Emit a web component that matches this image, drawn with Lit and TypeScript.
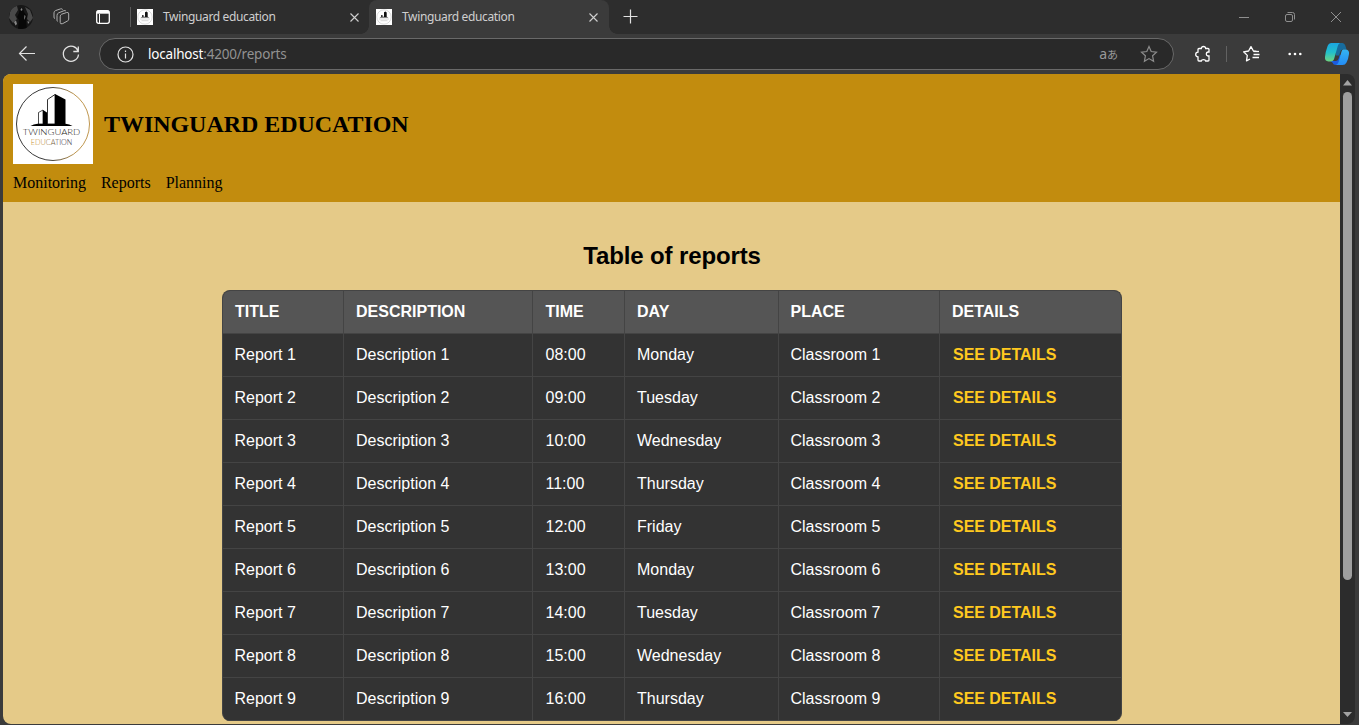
import { LitElement, html, svg, css } from "lit";
import { customElement, property } from "lit/decorators.js";

const DAYS = ["Monday", "Tuesday", "Wednesday", "Thursday", "Friday"];
const reports = Array.from({ length: 9 }, (_, i) => ({
  title: `Report ${i + 1}`,
  description: `Description ${i + 1}`,
  time: `${String(i + 8).padStart(2, "0")}:00`,
  day: DAYS[i % 5],
  place: `Classroom ${i + 1}`,
}));

const buildings = svg`
  <path d="M17.500 42q3-2 7-2.300h28q4 .3 7 2.300z" fill="#000"/>
  <path d="M42 10l10.500 5.500V41H42z" fill="#000"/>
  <path d="M34.500 40V15.500L42 10.500V40z" fill="#fff" stroke="#000" stroke-width=".8"/>
  <path d="M30 26l4 2.500V41h-4z" fill="#000"/>
  <path d="M25.500 40V28.500l4.500-2.500v14z" fill="#fff" stroke="#000" stroke-width=".7"/>`;

@customElement("twin-logo")
export class TwinLogo extends LitElement {
  static styles = css`
    :host { display: block; flex: none; }
    svg { display: block; width: 100%; height: 100%; }
    text { font-family: Lato, sans-serif; font-weight: 300; }
  `;
  render() {
    return html`<svg viewBox="0 0 80 80">
      <defs><linearGradient id="ring"><stop offset=".45" stop-color="#222"/><stop offset=".8" stop-color="#b88b3b"/></linearGradient>
      <linearGradient id="edu"><stop offset=".25" stop-color="#c08c2c"/><stop offset=".75" stop-color="#333"/></linearGradient></defs>
      <rect width="80" height="80" fill="#fff"/>
      <circle cx="40" cy="40" r="36.500" fill="none" stroke="url(#ring)" stroke-width=".9"/>
      ${buildings}
      <text x="9.800" y="51.300" font-size="8.200" textLength="57.500" lengthAdjust="spacingAndGlyphs" fill="#222">TWINGUARD</text>
      <text x="17.800" y="61" font-size="6.800" textLength="41.500" lengthAdjust="spacingAndGlyphs" fill="url(#edu)">EDUCATION</text>
    </svg>`;
  }
}

@customElement("browser-tab")
export class BrowserTab extends LitElement {
  @property({ type: Boolean, reflect: true }) active = false;
  static styles = css`
    :host { display: flex; align-items: center; box-sizing: border-box; height: 34px; width: 239px; padding: 0 9px 0 7px; position: relative; color: #cfcfcf; }
    :host([active]) { background: #3b3b3b; border-radius: 8px 8px 0 0; width: 240px; padding-right: 10px; }
    .favicon { width: 16px; height: 16px; margin-right: 10px; flex: none; }
    .label { flex: 1; font: 12px/16px "Noto Sans", sans-serif; letter-spacing: -0.36px; white-space: nowrap; }
    .close { width: 11px; height: 11px; flex: none; }
    .foot { position: absolute; bottom: 0; width: 8px; height: 8px; }
    .left { left: -8px; background: radial-gradient(circle at 0 0, transparent 7.500px, #3b3b3b 8px); }
    .right { right: -8px; background: radial-gradient(circle at 100% 0, transparent 7.500px, #3b3b3b 8px); }
  `;
  render() {
    return html`
      <svg class="favicon" viewBox="0 0 16 16"><rect width="16" height="16" fill="#fff"/><circle cx="8" cy="8" r="7.200" fill="none" stroke="#ccc" stroke-width=".7"/><path d="M3.500 8.500l1.700-.7V6h1.300v1.700H8V3.300l1.500-.8 1.200.9v4.300l1.800.8z" fill="#111"/><path d="M3 10h10M4.500 11.700h7" stroke="#bbb" stroke-width=".6"/></svg>
      <span class="label">Twinguard education</span>
      <svg class="close" viewBox="0 0 11 11"><path d="M1.500 1.500l8 8m0-8l-8 8" stroke="#d0d0d0" stroke-width="1.100"/></svg>
      ${this.active ? html`<span class="foot left"></span><span class="foot right"></span>` : ""}`;
  }
}

@customElement("report-table")
export class ReportTable extends LitElement {
  static styles = css`
    :host { display: block; box-sizing: border-box; width: 900px; border: 1px solid #444; border-bottom: 0; border-radius: 8px; overflow: hidden; background: #333; color: #fff; font: 16px/18px "Liberation Sans", Arial, sans-serif; }
    .row { display: grid; grid-template-columns: 121px 189px 92px 154px 161px 181px; height: 43px; }
    .cell { box-sizing: border-box; padding: 12px 11px 12px 12.500px; border-right: 1px solid #444; border-bottom: 1px solid #444; white-space: nowrap; }
    .cell:first-child, .cell:nth-child(5) { padding-left: 12px; }
    .cell:nth-child(3) { padding-left: 13px; }
    .cell:last-child { border-right: 0; }
    .head { background: #555; font-weight: bold; text-transform: uppercase; }
    .head .cell:first-child { padding-left: 12.500px; }
    .link { color: #ffc91f; font-weight: bold; padding-left: 13.500px; letter-spacing: -0.03px; }
  `;
  render() {
    return html`
      <div class="row head">${["Title", "Description", "Time", "Day", "Place", "Details"].map((h) => html`<div class="cell">${h}</div>`)}</div>
      ${reports.map((r) => html`<div class="row">
        <div class="cell">${r.title}</div><div class="cell">${r.description}</div><div class="cell">${r.time}</div>
        <div class="cell">${r.day}</div><div class="cell">${r.place}</div><div class="cell link">SEE DETAILS</div>
      </div>`)}`;
  }
}

@customElement("app-root")
export class AppRoot extends LitElement {
  static styles = css`
    :host { display: flex; flex-direction: column; width: 1359px; height: 725px; overflow: hidden; background: #3b3b3b; }
    svg { display: block; flex: none; fill: none; stroke: #e2e2e2; stroke-width: 1.200; }
    .tabs { display: flex; height: 34px; background: #2d2d2d; flex: none; }
    .tools { width: 130px; flex: none; }
    .divider { width: 1px; height: 20px; margin-top: 7px; background: #5b5b5b; margin-right: -1px; }
    .spacer { flex: 1; }
    .bar { display: flex; height: 40px; flex: none; align-items: center; }
    .address { box-sizing: border-box; display: flex; align-items: center; width: 1075px; height: 32px; border: 1px solid #696969; border-radius: 16px; background: #292929; flex: none; }
    .info { margin-left: 16.500px; }
    .url { flex: 1; margin-left: 14.500px; font: 13.500px/18px "Noto Sans", sans-serif; letter-spacing: -0.2px; color: #929292; }
    .host { color: #fff; }
    .translate { display: flex; align-items: baseline; font: 14px/18px "Noto Sans", sans-serif; color: #999; margin-right: 22px; }
    .kana { font: 11px/18px "Noto Sans CJK JP", sans-serif; }
    .star { margin-right: 15px; }
    .view { display: flex; height: 650px; width: 1352px; margin-left: 3px; border-radius: 8px; overflow: hidden; background: #2c2c2c; flex: none; }
    .page { width: 1337px; background: #e5ca88; overflow: hidden; flex: none; }
    .header { box-sizing: border-box; height: 128px; padding: 10px; background: #c28c0e; font-family: "Liberation Serif", "Times New Roman", serif; color: #000; }
    .brand { display: flex; align-items: center; }
    .logo { width: 80px; height: 80px; margin-right: 11px; }
    .name { font-size: 24px; line-height: 28px; font-weight: bold; margin: 0; letter-spacing: -0.05px; }
    .nav { display: flex; gap: 15px; margin-top: 10px; font-size: 16px; line-height: 18px; }
    .main { display: flex; flex-direction: column; align-items: center; padding-top: 40px; }
    .heading { margin: 0 0 20px; font: bold 24px/28px "Liberation Sans", Arial, sans-serif; color: #000; padding-left: 1px; letter-spacing: -0.12px; }
    .scroll { width: 15px; display: flex; flex-direction: column; align-items: center; flex: none; }
    .up { margin-top: 6px; }
    .thumb { width: 9px; height: 488px; margin-top: 6px; border-radius: 5px; background: #9f9f9f; }
    .down { margin-top: auto; margin-bottom: 7px; }
  `;
  render() {
    return html`
      <div class="tabs">
        <svg class="tools" width="130" height="34" viewBox="0 0 130 34">
          <defs><clipPath id="face"><circle cx="21" cy="17" r="12"/></clipPath></defs>
          <g clip-path="url(#face)" stroke="none"><path fill="#171717" d="M9 5h24v24H9z"/>
            <path fill="#4a4a4a" d="M11 7l6-1 1 4-3 5 2 4-4 4-4-5zM25 7l5 3 3 8-3 4-3-3 1-5z"/>
            <path fill="#080808" d="M20 8l3 0 1 4 3 4-1 5 1 8h-9l1-9-2-3 2-4z"/>
            <path fill="#888" d="M20.500 9l1.500-1 .5 2-1.500 1zM14 22l2-1.500 1 3.500-1.500 1.500zM24.500 15l1 1-.8 4-.5-2zM27.500 21l2 1-1.500 2z"/></g>
          <g stroke="#b0b0b0" stroke-width="1" stroke-linejoin="round">
            <path d="M61.700 14.200l5-1.700q2-.5 2 1.400v5.200q0 1.500-1.400 2l-4.600 2.500q-2.500 1-2.500-1.200v-5.600q0-2 1.500-2.600z"/>
            <path d="M57.700 21.300l-.7-.5v-5.300q0-2 1.700-2.700l5.300-2.100q1.500-.5 2 .6M55 18.500l-1-.7v-5q0-1.500 1.500-2.200l5-1.700q1.500-.4 2.200.6"/></g>
          <rect x="96.700" y="10.700" width="12.600" height="12.600" rx="2" stroke="#fff" stroke-width="1.300"/><path d="M97 12.200h12" stroke="#fff" stroke-width="3"/><path d="M99.500 14v9" stroke="#fff" stroke-width="1"/>
        </svg>
        <span class="divider"></span>
        <browser-tab></browser-tab>
        <browser-tab active></browser-tab>
        <svg width="44" height="34" viewBox="609 0 44 34"><path d="M623.500 16.500h14M630.500 9.500v14"/></svg>
        <span class="spacer"></span>
        <svg width="139" height="34" viewBox="1220 0 139 34"><g stroke="#8f8f8f" stroke-width="1"><path d="M1239 17.500h10"/><rect x="1285.500" y="14.500" width="7" height="7" rx="1.500"/><path d="M1287.500 12.500h5q2 0 2 2v5M1331 12l10 10m0-10l-10 10"/></g></svg>
      </div>
      <div class="bar">
        <svg width="99" height="40" viewBox="0 34 99 40"><path d="M35 53.500h-15.500m7-7l-7 7 7 7"/><path d="M78.200 51.500a7.600 7.600 0 1 0 .3 3M78.300 46.500v5h-5" stroke-width="1.300"/></svg>
        <div class="address">
          <svg class="info" width="17" height="17" viewBox="0 0 17 17"><circle cx="8.500" cy="8.500" r="7.500"/><path d="M8.500 7.500v5M8.500 4.500v1.500"/></svg>
          <div class="url"><span class="host">localhost</span>:4200/reports</div>
          <span class="translate">a<span class="kana">あ</span></span>
          <svg class="star" width="18" height="18" viewBox="0 0 18 18"><path d="M9 1.500l2.200 5 5.300.6-3.900 3.700 1 5.500L9 13.600l-4.600 2.700 1-5.500-3.900-3.700 5.300-.6z" stroke="#8c8c8c"/></svg>
        </div>
        <svg width="185" height="40" viewBox="1174 34 185 40">
          <path d="M1199 48.500h2.300q.2-2 2.200-2t2.200 2h2.300q1 0 1 1v2.500h-1q-1.700.3-1.700 2t1.700 2h1v4q0 1-1 1h-2.300q-.2-1.400-2.200-1.400t-2.200 1.400h-2.300q-1 0-1-1v-3.200q-2.300-.2-2.300-2.300t2.300-2.300v-2.700q0-1 1-1z" stroke="#fff" stroke-width="1.300"/>
          <path d="M1226.500 46v16" stroke="#626262" stroke-width="1"/>
          <path d="M1256.500 51.300l-3.100-.3-2.400-4.400-2.400 4.400-5 .8 3.700 3.600-.8 5.400 3.500-1.800M1253.500 54.500h6M1252.500 57.500h6.500" stroke="#fff" stroke-width="1.300" stroke-linejoin="round"/><path d="M1253.500 51.500h5.500" stroke="#fff" stroke-width="1.300"/>
          <g fill="#fff" stroke="none"><circle cx="1289.700" cy="54" r="1.300"/><circle cx="1295" cy="54" r="1.300"/><circle cx="1300.300" cy="54" r="1.300"/></g>
          <defs><linearGradient id="ca" x2="0" y2="1"><stop stop-color="#1ba6e2"/><stop offset=".5" stop-color="#22bfcb"/><stop offset="1" stop-color="#6fd580"/></linearGradient><linearGradient id="cb" x2="0" y2="1"><stop stop-color="#35b4f2"/><stop offset="1" stop-color="#238cf5"/></linearGradient></defs>
          <g stroke="none"><path d="M1336 43h6.500q2 0 2.800 2.500l1.200 4h-4q-1.800.3-2.300 2.500l-1 3.500h-3.500z" fill="#176c9e"/><path d="M1330.500 61h5.500q2-.2 2.600-2.200l1-3.500 4-1-2.600 9q-.6 1.700-2.500 1.700h-2.500q-2.800 0-3.600-2.500z" fill="#1b5ce0"/>
          <path d="M1331.500 43h8.500q-1.700.8-2.300 3.200l-3.400 12q-.9 3.300-3.800 3.300h-2q-4-.5-3.500-4.500.5-5.500 2.600-11 1.200-3 3.900-3z" fill="url(#ca)"/>
          <path d="M1343 49.500h3q3.500.5 3 4.500-.6 5-2.500 8.500-1.200 2.500-4 2.500h-6.500q2-1 2.700-3.300l2.700-9.600q.6-2.300 1.600-2.600z" fill="url(#cb)"/></g>
        </svg>
      </div>
      <div class="view">
        <div class="page">
          <div class="header">
            <div class="brand"><twin-logo class="logo"></twin-logo><h1 class="name">TWINGUARD EDUCATION</h1></div>
            <div class="nav"><span>Monitoring</span><span>Reports</span><span>Planning</span></div>
          </div>
          <div class="main"><h2 class="heading">Table of reports</h2><report-table></report-table></div>
        </div>
        <div class="scroll">
          <svg class="up" width="9" height="6" viewBox="0 0 9 6"><path d="M0 5.500L4.500 0 9 5.500z" fill="#a3a3a3" stroke="none"/></svg>
          <div class="thumb"></div>
          <svg class="down" width="9" height="5" viewBox="0 0 9 5"><path d="M0 0h9L4.500 5z" fill="#a3a3a3" stroke="none"/></svg>
        </div>
      </div>`;
  }
}
